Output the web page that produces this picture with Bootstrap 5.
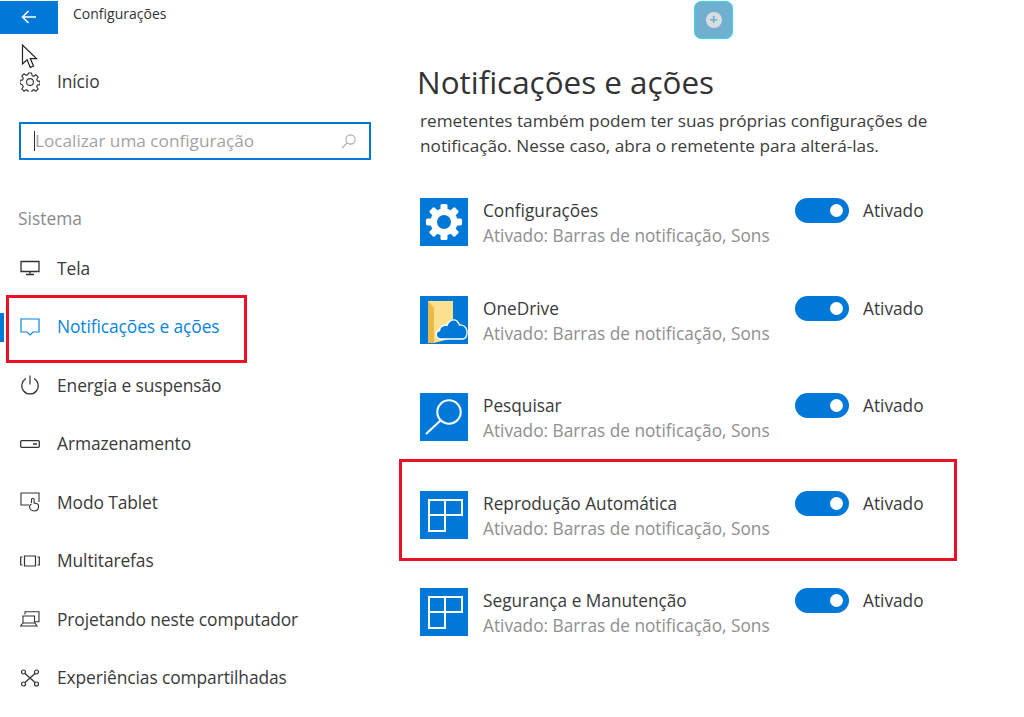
<!DOCTYPE html>
<html lang="pt-BR">
<head>
    <meta charset="UTF-8">
    <meta name="viewport" content="width=device-width, initial-scale=1.0">
    <title>Configurações</title>
    <link href="https://cdn.jsdelivr.net/npm/bootstrap@5.3.0/dist/css/bootstrap.min.css" rel="stylesheet">
    <style>
        html, body { height: 717px; overflow: hidden; }
        body { font-family: "Open Sans", "Noto Sans", sans-serif; color: #333; background: #fff; position: relative; }
        .top-strip { height: 34px; }
        .back-btn { width: 58px; height: 33px; background: #0078d7; }
        .app-title { font-size: 14px; margin-left: 15px; margin-top: -8px; color: #333; }
        .float-btn { position: absolute; left: 694px; top: 1px; width: 39px; height: 38px; background: #6fafd0; border: 1px solid #2fdce8; border-radius: 7px; }
        .float-dot { width: 16px; height: 16px; border-radius: 50%; background: #d9dde0; color: #6fafd0; font-size: 15px; font-weight: 700; line-height: 15px; text-align: center; }
        .mouse-arrow { position: absolute; left: 21px; top: 44px; }
        .side-col { width: 400px; flex: none; }
        .home-row { height: 30px; margin-top: 33px; padding-left: 20px; }
        .nav-ico { width: 20px; flex: none; margin-right: 17px; color: #333; }
        .side-text { font-size: 17.4px; letter-spacing: -.1px; color: #3a3a3a; white-space: nowrap; margin-top: -1px; }
        .search-box { width: 352px; height: 38px; margin: 25px 0 0 19px; border: 2px solid #0078d7; padding: 0 13px; }
        .caret-bar { width: 1px; height: 20px; background: #333; }
        .search-hint { font-size: 17.2px; color: #a3a3a3; white-space: nowrap; margin-top: -1px; }
        .group-label { font-size: 17.4px; color: #8a8a8a; margin: 47px 0 0 18px; line-height: 22px; height: 22px; }
        .side-list { margin-top: 10px; }
        .side-item { height: 58.5px; padding-left: 20px; position: relative; }
        .side-item.is-on .side-text, .side-item.is-on .nav-ico { color: #0a84e0; }
        .on-bar { position: absolute; left: 0; top: 15px; width: 4px; height: 29px; background: #0078d7; }
        .red-frame { position: absolute; border: 3px solid #ec1024; pointer-events: none; }
        .frame-nav { left: 6px; top: -3px; width: 241px; height: 68px; }
        .main-col { flex: 1; padding-left: 17px; }
        .page-title { font-size: 31.4px; font-weight: 400; margin: 28px 0 0; line-height: 40px; color: #333; white-space: nowrap; }
        .intro { font-size: 17.2px; line-height: 25px; margin: 6px 0 0 3px; color: #3c3c3c; white-space: nowrap; }
        .app-list { margin: 40px 0 0 3px; }
        .app-row { height: 97.5px; position: relative; }
        .app-ico { width: 48px; height: 48px; background: #0078d7; flex: none; margin-right: 15px; }
        .app-info { width: 312px; flex: none; }
        .app-name { font-size: 17.25px; line-height: 25px; color: #3a3a3a; white-space: nowrap; }
        .app-sub { font-size: 17.25px; line-height: 25px; color: #8f8f8f; white-space: nowrap; }
        .tgl { width: 54px; height: 25px; background: #0078d7; border-radius: 13px; flex: none; margin-right: 14px; padding-right: 6px; }
        .tgl-knob { width: 13px; height: 13px; border-radius: 50%; background: #fff; }
        .frame-app { left: -21px; top: -32px; width: 558px; height: 102px; }
    </style>
</head>
<body>
    <div class="top-strip d-flex align-items-center">
        <div class="back-btn d-flex align-items-center justify-content-center">
            <svg width="16" height="14" viewBox="0 0 16 14" fill="none" stroke="#fff" stroke-width="1.5"><path d="M15 7H1.5M7.5 1l-6 6 6 6"/></svg>
        </div>
        <div class="app-title">Configurações</div>
    </div>

    <div class="float-btn d-flex align-items-center justify-content-center">
        <div class="float-dot">+</div>
    </div>

    <svg class="mouse-arrow" width="17" height="27" viewBox="0 0 17 27" fill="#fff" stroke="#222" stroke-width="1.2"><path d="M1.5 1v19l4.6-4.2 3.2 7.6 3.2-1.4-3.2-7.4h6.2z"/></svg>

    <div class="d-flex">
        <div class="side-col">
            <div class="home-row d-flex align-items-center">
                <svg class="nav-ico" height="20" viewBox="0 0 20 20" fill="none" stroke="currentColor" stroke-width="1.1"><path d="M8.4 1h3.2l.5 2.6 1.6.7 2.2-1.5 2.3 2.3-1.5 2.2.7 1.6 2.6.5v3.2l-2.6.5-.7 1.6 1.5 2.2-2.3 2.3-2.2-1.5-1.6.7-.5 2.6H8.4l-.5-2.6-1.6-.7-2.2 1.5-2.3-2.3 1.5-2.2-.7-1.6L0 11.6V8.4l2.6-.5.7-1.6-1.5-2.2 2.3-2.3 2.2 1.5 1.6-.7z" transform="scale(1)"/><circle cx="10" cy="10" r="3.4"/></svg>
                <span class="side-text">Início</span>
            </div>
            <div class="search-box d-flex align-items-center">
                <span class="caret-bar"></span>
                <span class="search-hint flex-grow-1">Localizar uma configuração</span>
                <svg width="15" height="15" viewBox="0 0 15 15" fill="none" stroke="#a8a8a8" stroke-width="1.1"><circle cx="9.5" cy="5.5" r="4.6"/><path d="M6.2 8.8 1 14"/></svg>
            </div>
            <div class="group-label">Sistema</div>
            <div class="side-list">
                <div class="side-item d-flex align-items-center">
                    <svg class="nav-ico" height="16" viewBox="0 0 20 16" fill="none" stroke="currentColor" stroke-width="1.3"><path d="M1 1.5h18v10H1zM10 11.5v3M6 14.5h8"/></svg>
                    <span class="side-text">Tela</span>
                </div>
                <div class="side-item is-on d-flex align-items-center">
                    <span class="on-bar"></span>
                    <svg class="nav-ico" height="20" viewBox="0 0 20 20" fill="none" stroke="currentColor" stroke-width="1.2"><path d="M1 2h18v13h-6l-3 3-3-3H1z"/></svg>
                    <span class="side-text">Notificações e ações</span>
                    <span class="red-frame frame-nav"></span>
                </div>
                <div class="side-item d-flex align-items-center">
                    <svg class="nav-ico" height="20" viewBox="0 0 20 20" fill="none" stroke="currentColor" stroke-width="1.2"><path d="M6 3.6a8.2 8.2 0 1 0 8 0M10 .5v9"/></svg>
                    <span class="side-text">Energia e suspensão</span>
                </div>
                <div class="side-item d-flex align-items-center">
                    <svg class="nav-ico" height="8" viewBox="0 0 20 8" fill="none" stroke="currentColor" stroke-width="1.3"><rect x=".7" y=".7" width="18.6" height="6.6" rx="1"/><path d="M13 4h4" stroke-width="1.5"/></svg>
                    <span class="side-text">Armazenamento</span>
                </div>
                <div class="side-item d-flex align-items-center">
                    <svg class="nav-ico" height="20" viewBox="0 0 20 20" fill="none" stroke="currentColor" stroke-width="1.1"><path d="M9 13H1V1h18v9"/><path d="M11.5 11V7.5a1.3 1.3 0 0 1 2.6 0V11l3 .8c1.2.4 1.5 1.2 1.5 2.4 0 3-1.8 4.800-4.500 4.800-2.600 0-4.600-2-4.600-4.500 0-1 .5-1.800 2-2.500"/></svg>
                    <span class="side-text">Modo Tablet</span>
                </div>
                <div class="side-item d-flex align-items-center">
                    <svg class="nav-ico" height="12" viewBox="0 0 20 12" fill="none" stroke="currentColor" stroke-width="1.2"><path d="M4.5 1h11v10h-11zM2.500 2H.7v8h1.800M17.500 2h1.800v8h-1.800"/></svg>
                    <span class="side-text">Multitarefas</span>
                </div>
                <div class="side-item d-flex align-items-center">
                    <svg class="nav-ico" height="16" viewBox="0 0 20 16" fill="none" stroke="currentColor" stroke-width="1.1"><path d="M5 3.5V.7h14v10h-4M3 5h11.500v7H3zM.5 15h16.500l-2-3H3z"/></svg>
                    <span class="side-text">Projetando neste computador</span>
                </div>
                <div class="side-item d-flex align-items-center">
                    <svg class="nav-ico" height="18" viewBox="0 0 20 18" fill="none" stroke="currentColor" stroke-width="1.2"><circle cx="3.5" cy="3" r="2"/><circle cx="16.5" cy="3" r="2"/><circle cx="3.5" cy="15" r="2"/><circle cx="16.5" cy="15" r="2"/><path d="m5 4.5 10 9M15 4.5l-10 9"/></svg>
                    <span class="side-text">Experiências compartilhadas</span>
                </div>
            </div>
        </div>

        <div class="main-col">
            <h1 class="page-title">Notificações e ações</h1>
            <p class="intro">remetentes também podem ter suas próprias configurações de<br>notificação. Nesse caso, abra o remetente para alterá-las.</p>
            <div class="app-list">
                <div class="app-row d-flex">
                    <div class="app-ico d-flex align-items-center justify-content-center">
                        <svg width="36" height="36" viewBox="-18 -18 36 36"><g fill="#fff"><rect x="-3.5" y="-18" width="7" height="36" rx="1.5"/><rect x="-3.5" y="-18" width="7" height="36" rx="1.5" transform="rotate(45)"/><rect x="-3.5" y="-18" width="7" height="36" rx="1.5" transform="rotate(90)"/><rect x="-3.5" y="-18" width="7" height="36" rx="1.5" transform="rotate(135)"/><circle r="13.5"/></g><circle r="7" fill="#0078d7"/></svg>
                    </div>
                    <div class="app-info">
                        <div class="app-name">Configurações</div>
                        <div class="app-sub">Ativado: Barras de notificação, Sons</div>
                    </div>
                    <span class="tgl d-flex align-items-center justify-content-end"><span class="tgl-knob"></span></span>
                    <span class="app-name">Ativado</span>
                </div>
                <div class="app-row d-flex">
                    <div class="app-ico">
                        <svg width="48" height="48" viewBox="0 0 48 48"><path d="M8 5h25v37L14 47H8z" fill="#fbe08f"/><path d="M8 5l6 7v35H8z" fill="#e9b949"/><path d="M21 43c-5.5 0-6.5-7.5-1.5-8.5.5-4 4-6 7.5-5 2.5-7 10-8 12.5-.5 5.5-.5 8 4 7.5 8-.3 3.5-2 6-4.500 6z" fill="#0078d7" stroke="#fff" stroke-width="1.3"/></svg>
                    </div>
                    <div class="app-info">
                        <div class="app-name">OneDrive</div>
                        <div class="app-sub">Ativado: Barras de notificação, Sons</div>
                    </div>
                    <span class="tgl d-flex align-items-center justify-content-end"><span class="tgl-knob"></span></span>
                    <span class="app-name">Ativado</span>
                </div>
                <div class="app-row d-flex">
                    <div class="app-ico">
                        <svg width="48" height="48" viewBox="0 0 48 48" fill="none" stroke="#fff" stroke-width="2"><circle cx="29" cy="19" r="11.7"/><path d="M20.5 27.5 6 41"/></svg>
                    </div>
                    <div class="app-info">
                        <div class="app-name">Pesquisar</div>
                        <div class="app-sub">Ativado: Barras de notificação, Sons</div>
                    </div>
                    <span class="tgl d-flex align-items-center justify-content-end"><span class="tgl-knob"></span></span>
                    <span class="app-name">Ativado</span>
                </div>
                <div class="app-row d-flex">
                    <div class="app-ico">
                        <svg width="48" height="48" viewBox="0 0 48 48" fill="none" stroke="#fff" stroke-width="2"><path d="M9 9h33v15H9zM9 24h16v16H9zM25 9v15"/></svg>
                    </div>
                    <div class="app-info">
                        <div class="app-name">Reprodução Automática</div>
                        <div class="app-sub">Ativado: Barras de notificação, Sons</div>
                    </div>
                    <span class="tgl d-flex align-items-center justify-content-end"><span class="tgl-knob"></span></span>
                    <span class="app-name">Ativado</span>
                    <span class="red-frame frame-app"></span>
                </div>
                <div class="app-row d-flex">
                    <div class="app-ico">
                        <svg width="48" height="48" viewBox="0 0 48 48" fill="none" stroke="#fff" stroke-width="2"><path d="M9 9h33v15H9zM9 24h16v16H9zM25 9v15"/></svg>
                    </div>
                    <div class="app-info">
                        <div class="app-name">Segurança e Manutenção</div>
                        <div class="app-sub">Ativado: Barras de notificação, Sons</div>
                    </div>
                    <span class="tgl d-flex align-items-center justify-content-end"><span class="tgl-knob"></span></span>
                    <span class="app-name">Ativado</span>
                </div>
            </div>
        </div>
    </div>
    <script src="https://cdn.jsdelivr.net/npm/bootstrap@5.3.0/dist/js/bootstrap.bundle.min.js"></script>
</body>
</html>
